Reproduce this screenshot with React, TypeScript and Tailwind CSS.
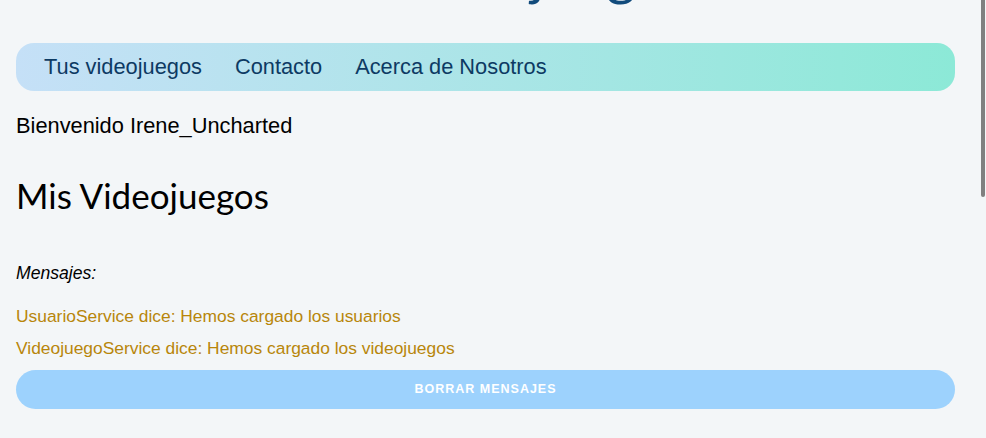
import React from 'react';

const navLinks = ['Tus videojuegos', 'Contacto', 'Acerca de Nosotros'];

const mensajes = [
  'UsuarioService dice: Hemos cargado los usuarios',
  'VideojuegoService dice: Hemos cargado los videojuegos',
];

export default function App() {
  return (
    <div className="flex h-[438px] w-full overflow-hidden bg-[#f3f6f8]">
      {/* contenido (desplazado hacia abajo) */}
      <main className="min-w-0 flex-1 px-4 font-['Liberation_Sans',Arial,sans-serif]">
        <h1 className="-mt-[56px] mb-[43px] pl-[9px] text-center font-['Lato',sans-serif] text-[57px] leading-[56px] text-[#114b7c]">
          Tus Videojuegos
        </h1>

        <nav className="flex h-[48px] items-center gap-[33px] rounded-[18px] bg-gradient-to-r from-[#c5e0f7] to-[#8ce9d7] px-[28px]">
          {navLinks.map((link) => (
            <a key={link} href="#" className="text-[21.8px] leading-[24px] text-[#0d3a63]">
              {link}
            </a>
          ))}
        </nav>

        <p className="mt-[22.5px] text-[21.8px] leading-[24px] text-black">Bienvenido Irene_Uncharted</p>

        <h2 className="mt-[36px] font-['Lato',sans-serif] text-[35px] leading-[43px] text-black">Mis Videojuegos</h2>

        <section className="mt-[46.5px]">
          <h3 className="text-[17.6px] italic leading-[20px] text-black">Mensajes:</h3>
          <div className="mt-[23px] flex flex-col gap-[12px]">
            {mensajes.map((m) => (
              <div key={m} className="text-[17.4px] leading-[20px] text-[#b8860b]">
                {m}
              </div>
            ))}
          </div>
          <button className="mt-[12px] flex h-[39px] w-full items-center justify-center rounded-full bg-[#9dd2fd] text-[12.5px] font-bold uppercase tracking-[1px] text-white">
            Borrar mensajes
          </button>
        </section>
      </main>

      {/* barra de desplazamiento */}
      <div className="w-[15px] shrink-0">
        <div className="ml-[10px] h-[197px] w-[4px] rounded-b-sm bg-[#808080]" />
      </div>
    </div>
  );
}
